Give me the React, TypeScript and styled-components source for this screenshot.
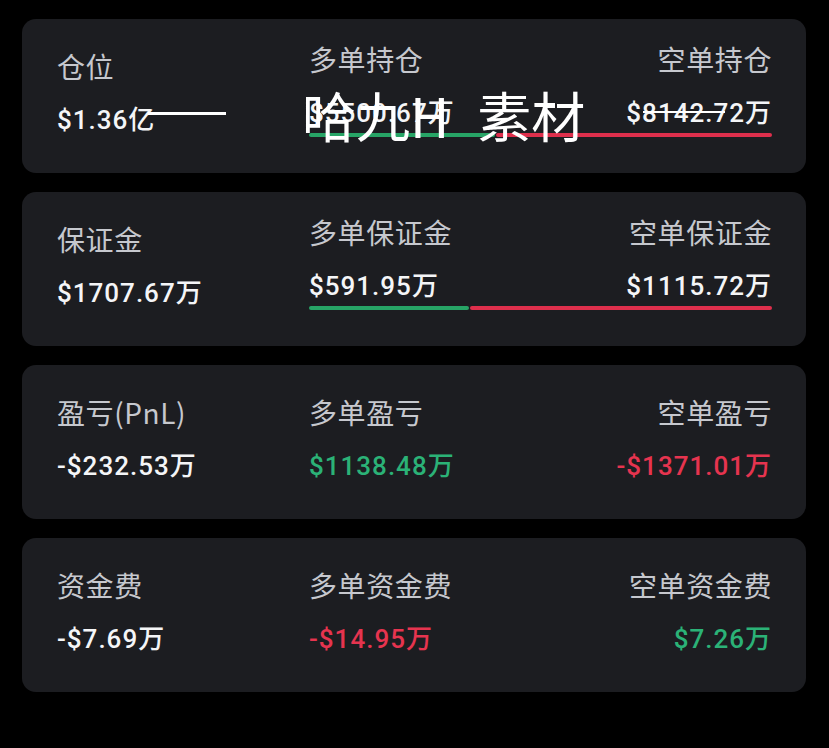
import React from "react";
import styled, { createGlobalStyle } from "styled-components";

const GlobalStyle = createGlobalStyle`
    html, body {
        margin: 0;
        padding: 0;
        background: #000;
    }
    body {
        font-family: "Noto Sans", "Noto Sans CJK SC", sans-serif;
        color: #fff;
    }
`

const Page = styled.div`
    width: 829px;
    height: 748px;
    box-sizing: border-box;
    padding: 19px 23px 0 22px;
    display: flex;
    flex-direction: column;
    gap: 19px;
    background: #000;
`

const Card = styled.div`
    position: relative;
    height: 154px;
    box-sizing: border-box;
    padding: 0 34px 6px 35px;
    border-radius: 14px;
    background: #1c1d21;
    display: grid;
    grid-template-columns: 252px 1fr 1fr;
    align-items: center;
`

const Column = styled.div<{ $align?: "left" | "right" }>`
    display: flex;
    flex-direction: column;
    align-items: ${(p) => (p.$align === "right" ? "flex-end" : "flex-start")};
`

const Label = styled.div`
    font-family: "Noto Sans CJK SC", sans-serif;
    font-size: 28px;
    line-height: 34px;
    letter-spacing: 0.6px;
    color: #c6c8ce;
`

const Value = styled.div<{ $tone?: "up" | "down" }>`
    margin-top: 20px;
    font-family: "Roboto", "Noto Sans CJK SC", sans-serif;
    font-size: 26px;
    line-height: 34px;
    font-weight: 500;
    letter-spacing: 1px;
    color: ${(p) => (p.$tone === "up" ? "#2bb277" : p.$tone === "down" ? "#e6344f" : "#f4f5f7")};
`

const SplitBlock = styled.div`
    grid-column: 2 / span 2;
    display: grid;
    grid-template-columns: 1fr 1fr;
    align-self: center;
    margin-top: -8px;
`

const Bar = styled.div`
    grid-column: 1 / span 2;
    display: flex;
    gap: 1px;
    height: 4px;
    margin-top: 3px;
`

const BarPart = styled.div<{ $side: "long" | "short" }>`
    height: 100%;
    border-radius: 2px;
    background: ${(p) => (p.$side === "long" ? "#27a466" : "#de2f4c")};
`

// 图片上的水印
const Watermark = styled.div`
    position: absolute;
    left: 126px;
    top: 67px;
    display: flex;
    align-items: center;
    pointer-events: none;
    color: #fff;
`

const WatermarkDash = styled.div`
    width: 78px;
    height: 3px;
    background: #fff;
    margin-right: 76px;
    margin-top: -4px;
`

const WatermarkText = styled.div<{ $gap?: number }>`
    font-family: "Noto Sans CJK SC", sans-serif;
    font-weight: 400;
    font-size: 54px;
    line-height: 58px;
    white-space: pre;
    margin-left: ${(p) => p.$gap ?? 0}px;
`

const StrikeLine = styled.div`
    position: absolute;
    left: 621px;
    top: 92px;
    width: 82px;
    height: 2px;
    background: #fff;
`

type Tone = "up" | "down" | undefined;

interface Row {
    label: string;
    value: string;
    tone?: Tone;
    longLabel: string;
    longValue: string;
    longTone?: Tone;
    shortLabel: string;
    shortValue: string;
    shortTone?: Tone;
    bar?: [number, number];
    watermark?: boolean;
}

const rows: Row[] = [
    {
        label: "仓位", value: "$1.36亿",
        longLabel: "多单持仓", longValue: "$5500.67万",
        shortLabel: "空单持仓", shortValue: "$8142.72万",
        bar: [5500.67, 8142.72],
        watermark: true,
    },
    {
        label: "保证金", value: "$1707.67万",
        longLabel: "多单保证金", longValue: "$591.95万",
        shortLabel: "空单保证金", shortValue: "$1115.72万",
        bar: [591.95, 1115.72],
    },
    {
        label: "盈亏(PnL)", value: "-$232.53万",
        longLabel: "多单盈亏", longValue: "$1138.48万", longTone: "up",
        shortLabel: "空单盈亏", shortValue: "-$1371.01万", shortTone: "down",
    },
    {
        label: "资金费", value: "-$7.69万",
        longLabel: "多单资金费", longValue: "-$14.95万", longTone: "down",
        shortLabel: "空单资金费", shortValue: "$7.26万", shortTone: "up",
    },
]

function StatCard({ row }: { row: Row }) {
    const sides = (
        <>
            <Column>
                <Label>{row.longLabel}</Label>
                <Value $tone={row.longTone}>{row.longValue}</Value>
            </Column>
            <Column $align="right">
                <Label>{row.shortLabel}</Label>
                <Value $tone={row.shortTone}>{row.shortValue}</Value>
            </Column>
        </>
    );

    return (
        <Card>
            <Column>
                <Label>{row.label}</Label>
                <Value $tone={row.tone}>{row.value}</Value>
            </Column>
            {row.bar ? (
                <SplitBlock>
                    {sides}
                    <Bar>
                        <BarPart $side="long" style={{ flex: row.bar[0] }} />
                        <BarPart $side="short" style={{ flex: row.bar[1] }} />
                    </Bar>
                </SplitBlock>
            ) : sides}
            {row.watermark && (
                <>
                    <Watermark>
                        <WatermarkDash />
                        <WatermarkText>{"哈九H"}</WatermarkText>
                        <WatermarkText $gap={28}>{"素材"}</WatermarkText>
                    </Watermark>
                    <StrikeLine />
                </>
            )}
        </Card>
    );
}

export default function App() {
    return (
        <>
            <GlobalStyle />
            <Page>
                {rows.map((row) => (
                    <StatCard key={row.label} row={row} />
                ))}
            </Page>
        </>
    );
}
